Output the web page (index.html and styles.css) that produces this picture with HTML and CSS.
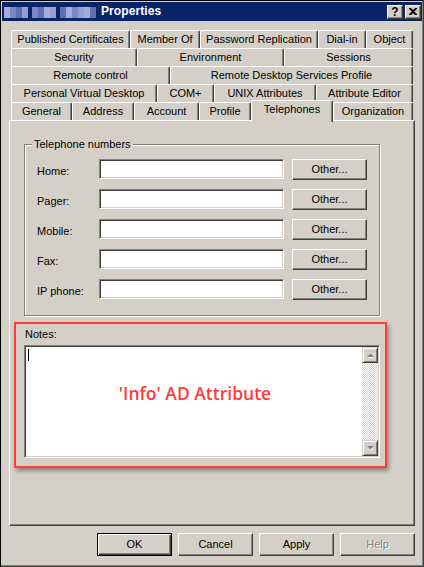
FILE: index.html
```html
<!DOCTYPE html>
<html>
<head>
<meta charset="utf-8">
<link rel="stylesheet" href="styles.css">
</head>
<body>
<div class="window">
  <div class="titlebar">
    <div class="blur">
      <span class="b b1"></span><span class="b b2"></span><span class="b b3"></span><span class="b b4"></span>
      <span class="gap"></span>
      <span class="b b2"></span><span class="b b3"></span><span class="b b1"></span><span class="b b4"></span>
      <span class="gap"></span>
      <span class="b b3"></span><span class="b b1"></span><span class="b b2"></span><span class="b b4"></span><span class="b b1"></span><span class="b b3"></span>
    </div>
    <span class="title">Properties</span>
    <div class="capbtns">
      <span class="capbtn q">?</span>
      <span class="capbtn x"><svg width="8" height="7" viewBox="0 0 8 7"><path d="M0 0h2l2 2 2-2h2v1L5 3.5 8 6v1H6L4 5 2 7H0V6l3-2.5L0 1z" fill="#000"/></svg></span>
    </div>
  </div>
  <div class="client">
    <div class="tabs">
      <div class="tabrow r1">
        <div class="tab">Published Certificates</div>
        <div class="tab">Member Of</div>
        <div class="tab">Password Replication</div>
        <div class="tab">Dial-in</div>
        <div class="tab">Object</div>
      </div>
      <div class="tabrow r2">
        <div class="tab">Security</div>
        <div class="tab">Environment</div>
        <div class="tab">Sessions</div>
      </div>
      <div class="tabrow r3">
        <div class="tab">Remote control</div>
        <div class="tab">Remote Desktop Services Profile</div>
      </div>
      <div class="tabrow r4">
        <div class="tab">Personal Virtual Desktop</div>
        <div class="tab">COM+</div>
        <div class="tab">UNIX Attributes</div>
        <div class="tab">Attribute Editor</div>
      </div>
      <div class="tabrow r5">
        <div class="tab">General</div>
        <div class="tab">Address</div>
        <div class="tab">Account</div>
        <div class="tab">Profile</div>
        <div class="tab active">Telephones</div>
        <div class="tab">Organization</div>
      </div>
    </div>
    <div class="panel">
      <fieldset class="group">
        <legend>Telephone numbers</legend>
        <div class="phones">
          <span class="lbl">Home:</span><span class="field"></span><span class="btn">Other...</span>
          <span class="lbl">Pager:</span><span class="field"></span><span class="btn">Other...</span>
          <span class="lbl">Mobile:</span><span class="field"></span><span class="btn">Other...</span>
          <span class="lbl">Fax:</span><span class="field"></span><span class="btn">Other...</span>
          <span class="lbl">IP phone:</span><span class="field"></span><span class="btn">Other...</span>
        </div>
      </fieldset>
      <div class="notes">
        <div class="notes-lbl">Notes:</div>
        <div class="memo">
          <div class="memo-text">
            <span class="caret"></span>
            <div class="annot">'Info' AD Attribute</div>
          </div>
          <div class="vscroll">
            <span class="arrow"><svg width="7" height="5" viewBox="0 0 7 5"><path d="M1 5h6L4 1.5z" fill="#fff"/><path d="M0 4h7L3.5 0.5z" fill="#808080"/></svg></span>
            <span class="track"></span>
            <span class="arrow"><svg width="7" height="5" viewBox="0 0 7 5"><path d="M1 1h6L4 4.5z" fill="#fff"/><path d="M0 0h7L3.5 3.5z" fill="#808080"/></svg></span>
          </div>
        </div>
      </div>
    </div>
    <div class="buttons">
      <span class="btn big default">OK</span>
      <span class="btn big">Cancel</span>
      <span class="btn big">Apply</span>
      <span class="btn big disabled">Help</span>
    </div>
  </div>
</div>
</body>
</html>
```
FILE: styles.css
```css
* { box-sizing: border-box; }
html, body { margin: 0; padding: 0; background: #d4d0c8; }
body {
  font-family: "Liberation Sans", Arial, sans-serif;
  font-size: 11px;
  line-height: 13px;
  color: #000;
}
.window {
  width: 424px;
  height: 567px;
  border: 1px solid #000;
  border-right-color: #404040;
  border-bottom-color: #404040;
  padding: 1px;
  background: #d4d0c8;
  box-shadow: inset -1px -1px #808080;
}
.titlebar {
  height: 19px;
  background: #0a246a;
  display: flex;
  align-items: center;
  padding: 0 1px 0 2px;
}
.blur { display: flex; height: 11px; margin-top: 1px; }
.blur .b { width: 6px; height: 11px; }
.blur .gap { width: 4px; }
.b1 { background: #a3acd6; }
.b2 { background: #7c88c4; }
.b3 { background: #5f6fb5; }
.b4 { background: #95a0d0; }
.title {
  color: #fff;
  font-weight: bold;
  font-size: 12px;
  margin-left: 5px;
  letter-spacing: 0.1px;
}
.capbtns { margin-left: auto; display: flex; gap: 2px; }
.capbtn {
  width: 16px;
  height: 14px;
  background: #d4d0c8;
  border: 1px solid;
  border-color: #fff #404040 #404040 #fff;
  box-shadow: inset -1px -1px #808080;
  display: flex;
  align-items: center;
  justify-content: center;
  font-weight: bold;
  font-size: 12px;
  line-height: 12px;
}
.client { padding: 0 7px; }
.tabs { margin: 9px 0 0 2px; width: 402px; }
.tabrow { display: grid; height: 18px; }
.r1 { grid-template-columns: 119px 70px 118px 48px 47px; }
.r2 { grid-template-columns: 126px 147px 129px; }
.r3 { grid-template-columns: 159px 243px; }
.r4 { grid-template-columns: 146px 57px 102px 97px; }
.r5 { grid-template-columns: 61px 62px 65px 52px 82px 80px; }
.tab {
  height: 18px;
  border-top: 1px solid #fff;
  border-left: 1px solid #fff;
  border-right: 1px solid #404040;
  border-radius: 2px 2px 0 0;
  box-shadow: inset -1px 0 #808080;
  background: #d4d0c8;
  text-align: center;
  padding-top: 2px;
  white-space: nowrap;
}
.tab.active {
  position: relative;
  z-index: 1;
  height: 22px;
  margin-top: -2px;
  padding-top: 2px;
}
.panel {
  height: 406px;
  border: 1px solid;
  border-color: #fff #404040 #404040 #fff;
  box-shadow: inset -1px -1px #808080;
  padding: 17px 0 0 14px;
}
.group {
  margin: 0;
  width: 356px;
  border: 1px solid #808080;
  box-shadow: inset 1px 1px #fff, 1px 1px #fff;
  padding: 8px 11px 15px 12px;
}
.group legend {
  padding: 0 2px;
  margin-left: -5px;
  background: #d4d0c8;
  line-height: 13px;
}
.phones {
  display: grid;
  grid-template-columns: 54px 185px 75px;
  column-gap: 8px;
  row-gap: 9px;
  grid-auto-rows: 21px;
}
.lbl { padding-top: 6px; white-space: nowrap; }
.field {
  height: 20px;
  background: #fff;
  border: 1px solid;
  border-color: #808080 #fff #fff #808080;
  box-shadow: inset 1px 1px #404040, inset -1px -1px #d4d0c8;
}
.btn {
  display: flex;
  align-items: center;
  justify-content: center;
  height: 21px;
  background: #d4d0c8;
  border: 1px solid;
  border-color: #fff #404040 #404040 #fff;
  box-shadow: inset -1px -1px #808080;
}
.notes {
  margin: 6px 0 0 -10px;
  width: 373px;
  height: 146px;
  border: 2px solid #ff3b3b;
  box-shadow: 2px 3px 4px rgba(0,0,0,0.35);
  padding: 4px 0 0 8px;
}
.notes-lbl { padding-left: 1px; }
.memo {
  margin-top: 4px;
  width: 356px;
  height: 113px;
  background: #fff;
  border: 1px solid;
  border-color: #808080 #fff #fff #808080;
  box-shadow: inset 1px 1px #404040, inset -1px -1px #d4d0c8;
  padding: 1px;
  display: flex;
}
.memo-text { flex: 1; padding: 2px 0 0 2px; }
.caret { display: block; width: 1px; height: 12px; background: #000; }
.annot {
  margin-top: 22px;
  text-align: center;
  color: #ff3b3b;
  font-family: "Open Sans", "Liberation Sans", sans-serif;
  font-weight: 600;
  font-size: 17.5px;
  line-height: 20px;
}
.vscroll {
  width: 16px;
  display: flex;
  flex-direction: column;
}
.arrow {
  width: 16px;
  height: 16px;
  background: #d4d0c8;
  border: 1px solid;
  border-color: #d4d0c8 #404040 #404040 #d4d0c8;
  box-shadow: inset 1px 1px #fff, inset -1px -1px #808080;
  display: flex;
  align-items: center;
  justify-content: center;
}
.track {
  flex: 1;
  background: repeating-conic-gradient(#fff 0 25%, #d4d0c8 0 50%) 0 0 / 2px 2px;
}
.buttons {
  margin-top: 7px;
  display: flex;
  justify-content: flex-end;
  gap: 6px;
}
.btn.big { width: 75px; height: 23px; }
.btn.default {
  border: 1px solid #000;
  box-shadow: inset 1px 1px #fff, inset -1px -1px #404040, inset -2px -2px #808080;
}
.btn.disabled { color: #808080; text-shadow: 1px 1px #fff; }
```
